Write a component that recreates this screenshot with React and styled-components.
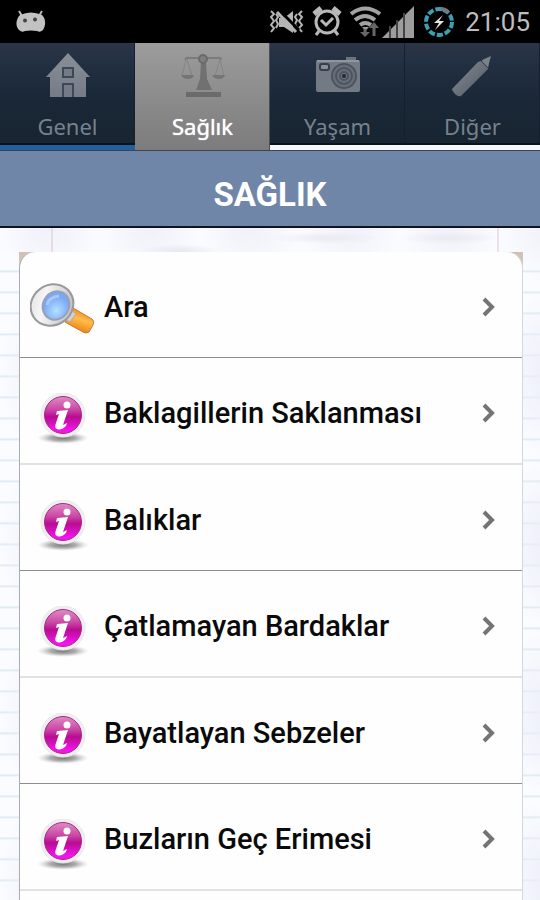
import React from 'react';
import styled, { createGlobalStyle } from 'styled-components';

const GlobalStyle = createGlobalStyle`
  *, *::before, *::after { box-sizing: border-box; }
  body {
    margin: 0;
    font-family: Roboto, "Noto Sans", sans-serif;
    color: #0a0a0a;
  }
`;

const Screen = styled.div`
  height: 100vh;
  display: flex;
  flex-direction: column;
  overflow: hidden;
  background-color: #fafbfe;
`;

const StatusBar = styled.header`
  flex: none;
  display: flex;
  align-items: center;
  justify-content: space-between;
  height: 43px;
  padding: 0 10px 0 16px;
  background: #000;
`;

const StatusIcons = styled.div`
  display: flex;
  align-items: center;
  gap: 8px;
`;

const Reception = styled.div`
  display: flex;
`;

const Clock = styled.time`
  margin-left: 2px;
  color: #bdbdbd;
  font-size: 26px;
  line-height: 32px;
`;

const TabBar = styled.nav`
  flex: none;
  display: grid;
  grid-template-columns: repeat(4, 1fr);
  height: 108px;
  background: #101a27;
  border-bottom: 1px solid #3c4352;
`;

const Tab = styled.button`
  display: flex;
  flex-direction: column;
  align-items: center;
  gap: 12px;
  padding: 8px 0 0;
  border: 0;
  box-shadow: ${(p) =>
    p.$active
      ? 'inset -1px 0 #4b4d51'
      : `inset 0 -5px ${p.$rule}, inset 0 -7px #0b121d, inset -1px 0 #142030`};
  background: ${(p) =>
    p.$active
      ? 'linear-gradient(#9c9c9c, #7c7c7c)'
      : 'linear-gradient(#2c3547 0, #222f42 20%, #1a2736 55%, #172431 100%)'};
  color: ${(p) => (p.$active ? '#fff' : '#77818d')};
  font-family: "Noto Sans", sans-serif;
  font-size: 22px;
  line-height: 30px;
  text-shadow: ${(p) => (p.$active ? '0 0 1px #fff' : 'none')};
  cursor: pointer;
`;

const TitleBar = styled.div`
  flex: none;
  display: flex;
  align-items: center;
  justify-content: center;
  height: 77px;
  padding-top: 12px;
  border-bottom: 2px solid #10151d;
  background: #7086a8;
`;

const Title = styled.h1`
  margin: 0;
  color: #fff;
  font-size: 33px;
  line-height: 40px;
  font-weight: 700;
`;

const Paper = styled.main`
  flex: 1;
  display: flex;
  min-height: 0;
  padding: 24px 17px 0 19px;
  background:
    linear-gradient(90deg, transparent 51px, #e6dbe8 51px, #e6dbe8 53px, transparent 53px) 0 0 / 100% 24px no-repeat,
    linear-gradient(90deg, transparent 497px, #efdfe7 497px, #efdfe7 499px, transparent 499px) 0 0 / 100% 24px no-repeat,
    radial-gradient(closest-side, #e6e8f2, transparent) 140px 16px / 80px 14px no-repeat,
    radial-gradient(closest-side, #ebe9f1, transparent) 270px 4px / 110px 12px no-repeat,
    radial-gradient(closest-side, #ebe9f1, transparent) 400px 4px / 100px 12px no-repeat,
    radial-gradient(closest-side, #eceef8, transparent) 0 60px / 100px 170px,
    linear-gradient(#fafbfe, #fafbfe) 0 0 / 100% 24px no-repeat,
    repeating-linear-gradient(transparent 0, transparent 18px, #dce8f1 19px, #e8f0f7 20px, transparent 21px) 0 24px,
    #fafcff;
`;

const CardCorner = styled.div`
  flex: 1;
  min-width: 0;
  display: flex;
  background: linear-gradient(#cfc0b2, #d5cbc3 14px, #b5b7bd 15px);
`;

const List = styled.ul`
  flex: 1;
  min-width: 0;
  margin: 0;
  padding: 0;
  list-style: none;
  overflow: hidden;
  border: solid #a9abb0;
  border-width: 0 1px;
  border-right-color: #d4d7dc;
  border-radius: 16px 16px 0 0;
  background: #fefefe;
`;

const Item = styled.li`
  border-bottom: ${(p) => (p.$soft ? '2px solid #e2e2e2' : '1px solid #8e8e8e')};
`;

const ItemLink = styled.a`
  display: grid;
  grid-template-columns: 66px 1fr 14px;
  align-items: center;
  column-gap: 8px;
  height: 105px;
  padding: 4px 26px 0 10px;
  color: inherit;
  font-size: 29px;
  line-height: 36px;
  font-weight: 500;
  text-decoration: none;
`;

const ItemIcon = styled.span`
  display: grid;
  place-items: center;
  padding-top: ${(p) => (p.$low ? '12px' : '4px')};
`;

const RobotIcon = () => (
  <svg width="30" height="24" viewBox="0 0 30 24" aria-hidden="true">
    <path d="M3 1 6 6M26 1l-3 5" stroke="#b9b9b9" strokeWidth="2" />
    <path d="M4 5q11-5 22 0c4 4 4 10 1 15q-3 3-6 1-6-1-12 0-3 2-6-1C-1 16 0 9 4 5z" fill="#c2c2c2" />
    <circle cx="9" cy="10.500" r="2" fill="#444" />
    <circle cx="19" cy="9.500" r="2" fill="#444" />
  </svg>
);

const MutedIcon = () => (
  <svg width="35" height="26" viewBox="0 0 35 26" fill="none" stroke="#b5b5b5" strokeWidth="2" aria-hidden="true">
    <path d="m2 2 3 3-3 3 3 4-3 4 3 3-3 4M7 5l2 3-2 3 2 4-2 4M33 2l-3 3 3 3-3 4 3 4-3 3 3 4M28 5l-2 3 2 3-2 4 2 4" />
    <path d="M10 9h5l9-7v22l-9-6h-5z" fill="#b5b5b5" stroke="none" />
    <path d="m10 1 20 20" stroke="#000" strokeWidth="3" />
    <path d="m8 3 19 20" strokeWidth="3" />
  </svg>
);

const AlarmIcon = () => (
  <svg width="30" height="31" viewBox="0 0 30 31" fill="none" stroke="#b9b9b9" aria-hidden="true">
    <circle cx="15" cy="16" r="11" strokeWidth="3" />
    <path d="m9 14 5 5 7-7" strokeWidth="3" />
    <path d="m2 8 7-6M28 8l-7-6" strokeWidth="5" />
    <path d="m7 25-3 4m19-4 3 4" strokeWidth="3" />
  </svg>
);

const WifiIcon = () => (
  <svg width="32" height="32" viewBox="0 0 32 32" fill="none" stroke="#a2a2a2" strokeWidth="4" aria-hidden="true">
    <path d="M1 8q14-11 29 0M5 14q10-8 20 0M10 19q5-4 11 0" />
    <path d="m12 21 7 0-3.500 4z" fill="#999" stroke="none" />
    <path d="M15 23v5M24 30v-9" stroke="#666" strokeWidth="3" />
    <path d="m10 26h10l-5 5zM19 22h10l-5-6z" fill="#666" stroke="none" />
  </svg>
);

const SignalIcon = () => (
  <svg width="33" height="32" viewBox="0 0 33 32" aria-hidden="true">
    <path d="M0 32 32 0v32z" fill="#9d9d9d" />
    <path d="M8 20v12M15 14v18M22 7v25" stroke="#444" strokeWidth="2" />
  </svg>
);

const BatteryIcon = () => (
  <svg width="32" height="32" viewBox="0 0 32 32" fill="none" aria-hidden="true">
    <circle cx="16" cy="16" r="13" stroke="#3ba0b4" strokeWidth="4" strokeDasharray="6.170 2" />
    <path d="M18 3q4 0 7 3" stroke="#777" strokeWidth="4" />
    <path d="m20 9-9 8h5l-4 7 9-9h-5z" fill="#e4e4e4" />
  </svg>
);

const HouseIcon = () => (
  <svg width="46" height="48" viewBox="0 0 46 48" aria-hidden="true">
    <defs>
      <linearGradient id="house" x2="0" y2="1">
        <stop stopColor="#8a8f96" />
        <stop offset="1" stopColor="#747c87" />
      </linearGradient>
    </defs>
    <path d="M23 2 45 26h-4v20H5V26H1z" fill="url(#house)" />
    <path d="M18 17h10v9H18zM18 46V33h10v13" fill="#737b86" stroke="#3d4857" strokeWidth="2" />
  </svg>
);

const ScalesIcon = () => (
  <svg width="46" height="48" viewBox="0 0 46 48" fill="none" aria-hidden="true">
    <path d="M5 9q1-3 5-2h27q4-1 4 2" stroke="#7b7b7b" strokeWidth="2" />
    <path d="M6 8 2 25M7 8l5 17M40 8l-5 17M40 8l4 17" stroke="#858585" />
    <path d="M1 24h13q-1 4-6 4t-7-4zM32 24h13q-1 4-6 4t-7-4z" fill="#757575" />
    <path d="M21 11h5l1 17 5 11H16l4-11z" fill="#717171" />
    <path d="M6 41h35v5H6z" fill="#6b6b6b" />
    <circle cx="23" cy="8" r="4" fill="#7e7e7e" stroke="#6b6b6b" strokeWidth="2" />
  </svg>
);

const CameraIcon = () => (
  <svg width="46" height="48" viewBox="0 0 46 48" aria-hidden="true">
    <path d="M31 6h10v3H31z" fill="#6d747e" />
    <rect x="1" y="9" width="44" height="32" rx="2" fill="#747a83" />
    <path d="M2 10h42" stroke="#92969c" strokeWidth="2" />
    <rect x="5" y="13" width="9" height="6" rx="2" fill="#8b9198" stroke="#353f4d" strokeWidth="2" />
    <g fill="none" stroke="#4c545f" strokeWidth="2">
      <circle cx="29" cy="25" r="12" fill="#686f79" />
      <circle cx="29" cy="25" r="8" />
      <circle cx="29" cy="25" r="4" />
    </g>
    <circle cx="29" cy="25" r="2" fill="#252c36" />
  </svg>
);

const MarkerIcon = () => (
  <svg width="46" height="48" viewBox="0 0 46 48" aria-hidden="true">
    <defs>
      <linearGradient id="marker" x1="0" y1="0" x2="1" y2="1">
        <stop stopColor="#8a8e94" />
        <stop offset="1" stopColor="#4d5661" />
      </linearGradient>
    </defs>
    <path d="m2 38 26-27 9-3 2 1-1 9-27 27q-3 1-6-2t-3-5z" fill="url(#marker)" />
    <path d="m32 9 9-4-3 11z" fill="#7c828a" />
    <path d="m31 10 7 7" stroke="#38424f" />
  </svg>
);

const SearchIcon = () => (
  <svg width="66" height="52" viewBox="0 0 66 52" aria-hidden="true">
    <defs>
      <linearGradient id="rim" x1="0" y1="0" x2="1" y2="1">
        <stop stopColor="#dcdcdc" />
        <stop offset=".35" stopColor="#f6f6f6" />
        <stop offset="1" stopColor="#b4b4b8" />
      </linearGradient>
      <radialGradient id="lens" cx=".6" cy=".65">
        <stop stopColor="#b4e0ff" />
        <stop offset="1" stopColor="#79a8f4" />
      </radialGradient>
      <linearGradient id="handle" x1=".7" y1="0" x2=".3" y2="1">
        <stop stopColor="#e67b17" />
        <stop offset=".45" stopColor="#ffbd4c" />
        <stop offset="1" stopColor="#e97200" />
      </linearGradient>
    </defs>
    <path d="m43 25 19 11q3 2 1 6l-4 7q-3 2-6 0L35 39z" fill="url(#handle)" stroke="#c87931" />
    <path d="m40 26 6 5-6 8-6-3z" fill="#d8d0c8" stroke="#aaa" />
    <ellipse cx="22" cy="22" rx="22" ry="20" transform="rotate(-35 22 22)" fill="url(#rim)" stroke="#9a9a9a" strokeWidth="2" />
    <ellipse cx="26" cy="22.500" rx="13" ry="14.500" transform="rotate(28 26 22.500)" fill="url(#lens)" stroke="#98a0b8" strokeWidth="2" />
    <path d="M17 22q2-8 12-9" fill="none" stroke="#a9c9fb" strokeWidth="3" />
  </svg>
);

const InfoIcon = () => (
  <svg width="56" height="52" viewBox="0 0 56 52" aria-hidden="true">
    <defs>
      <linearGradient id="ball" x2="0" y2="1">
        <stop stopColor="#e08cc6" />
        <stop offset=".35" stopColor="#cb47a5" />
        <stop offset=".55" stopColor="#b80c91" />
        <stop offset=".9" stopColor="#f213ed" />
      </linearGradient>
      <radialGradient id="shade">
        <stop stopColor="#777" />
        <stop offset=".5" stopColor="#999" stopOpacity=".8" />
        <stop offset="1" stopColor="#ccc" stopOpacity="0" />
      </radialGradient>
    </defs>
    <ellipse cx="28" cy="45" rx="26" ry="6" fill="url(#shade)" />
    <circle cx="28" cy="22" r="22" fill="#f0eef1" stroke="#e9e9e9" />
    <circle cx="28" cy="22" r="18.500" fill="url(#ball)" stroke="#a72b7e" />
    <circle cx="32" cy="12" r="3.500" fill="#fff" />
    <path d="m22 18 11-1-5 15 4-2-1 3q-5 5-9 3-3-1-1-6l3-9-3 1z" fill="#fff" />
  </svg>
);

const Chevron = () => (
  <svg width="14" height="20" viewBox="0 0 14 20" fill="none" aria-hidden="true">
    <path d="m2 2 8 8-8 8" stroke="#747474" strokeWidth="4" />
  </svg>
);

const tabs = [
  { label: 'Genel', Icon: HouseIcon, rule: '#235f9b' },
  { label: 'Sağlık', Icon: ScalesIcon, active: true },
  { label: 'Yaşam', Icon: CameraIcon, rule: '#f5f7f8' },
  { label: 'Diğer', Icon: MarkerIcon, rule: '#f5f7f8' },
];

const items = [
  { label: 'Ara', Icon: SearchIcon },
  { label: 'Baklagillerin Saklanması', Icon: InfoIcon },
  { label: 'Balıklar', Icon: InfoIcon },
  { label: 'Çatlamayan Bardaklar', Icon: InfoIcon },
  { label: 'Bayatlayan Sebzeler', Icon: InfoIcon },
  { label: 'Buzların Geç Erimesi', Icon: InfoIcon },
];

export default function App() {
  return (
    <Screen>
      <GlobalStyle />
      <StatusBar>
        <RobotIcon />
        <StatusIcons>
          <MutedIcon />
          <AlarmIcon />
          <Reception>
            <WifiIcon />
            <SignalIcon />
          </Reception>
          <BatteryIcon />
          <Clock>21:05</Clock>
        </StatusIcons>
      </StatusBar>
      <TabBar>
        {tabs.map(({ label, Icon, active, rule }) => (
          <Tab key={label} type="button" $active={active} $rule={rule} aria-current={active ? 'page' : undefined}>
            <Icon />
            {label}
          </Tab>
        ))}
      </TabBar>
      <TitleBar>
        <Title>SAĞLIK</Title>
      </TitleBar>
      <Paper>
        <CardCorner>
          <List>
            {items.map(({ label, Icon }, i) => (
              <Item key={label} $soft={i % 2 === 1}>
                <ItemLink href="#">
                  <ItemIcon $low={Icon === InfoIcon}>
                    <Icon />
                  </ItemIcon>
                  {label}
                  <Chevron />
                </ItemLink>
              </Item>
            ))}
          </List>
        </CardCorner>
      </Paper>
    </Screen>
  );
}
